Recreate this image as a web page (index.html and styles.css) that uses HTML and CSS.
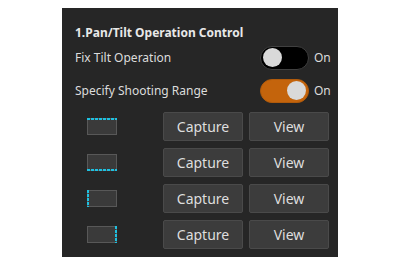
FILE: index.html
```html
<!DOCTYPE html>
<html lang="en">
<head>
  <meta charset="UTF-8">
  <title>Pan/Tilt Operation Control</title>
  <link rel="stylesheet" href="styles.css">
</head>
<body>

<div class="panel">
  <div class="title">1.Pan/Tilt Operation Control</div>

  <div class="switch-row">
    <span class="label">Fix Tilt Operation</span>
    <span class="switch-group">
      <span class="toggle off"><span class="knob"></span></span>
      <span class="state">On</span>
    </span>
  </div>

  <div class="switch-row">
    <span class="label">Specify Shooting Range</span>
    <span class="switch-group">
      <span class="toggle on"><span class="knob"></span></span>
      <span class="state">On</span>
    </span>
  </div>

  <!-- range edges: top / bottom / left / right -->
  <div class="range-grid">
    <div class="cell"><span class="thumb edge-top"></span></div>
    <button class="btn">Capture</button>
    <button class="btn">View</button>

    <div class="cell"><span class="thumb edge-bottom"></span></div>
    <button class="btn">Capture</button>
    <button class="btn">View</button>

    <div class="cell"><span class="thumb edge-left"></span></div>
    <button class="btn">Capture</button>
    <button class="btn">View</button>

    <div class="cell"><span class="thumb edge-right"></span></div>
    <button class="btn">Capture</button>
    <button class="btn">View</button>
  </div>
</div>

</body>
</html>
```

FILE: styles.css
```css
body {
  margin: 0;
  background-color: #ffffff;
  font-family: "Noto Sans", "Open Sans", sans-serif;
}

.panel {
  box-sizing: border-box;
  width: 276px;
  height: 249px;
  margin: 8px 0 0 62px;
  padding: 17px 8px 0 13px;
  background-color: #262626;
  color: #dcdcdc;
}

.title {
  font-size: 12px;
  font-weight: bold;
  line-height: 16px;
  color: #e8e8e8;
}

.switch-row {
  display: flex;
  align-items: center;
  justify-content: space-between;
  height: 33px;
  font-size: 12px;
}

.switch-group {
  display: flex;
  align-items: center;
  gap: 5px;
}

.toggle {
  box-sizing: border-box;
  position: relative;
  width: 49px;
  height: 24px;
  border-radius: 12px;
  display: flex;
  align-items: center;
  padding: 0 2px;
}

.toggle.off {
  background-color: #000000;
  border: 1px solid #404040;
}

.toggle.on {
  background-color: #c4640c;
  border: 1px solid #b05a0b;
  justify-content: flex-end;
}

.knob {
  width: 19px;
  height: 19px;
  border-radius: 50%;
  background-color: #d9d9d9;
}

.state {
  width: 16px;
  font-size: 12px;
}

.range-grid {
  display: grid;
  grid-template-columns: 82px 80px 80px;
  grid-auto-rows: 29px;
  column-gap: 6px;
  row-gap: 7px;
  margin-top: 5px;
}

.cell {
  display: flex;
  align-items: center;
}

.thumb {
  box-sizing: border-box;
  position: relative;
  width: 30px;
  height: 17px;
  margin-left: 12px;
  background-color: #3a3a3a;
  border: 1px solid #585858;
}

.thumb::after {
  content: "";
  position: absolute;
  background: repeating-linear-gradient(90deg, #1ec0e0 0 3px, transparent 3px 4px);
}

.edge-top::after,
.edge-bottom::after {
  left: -1px;
  right: -1px;
  height: 2px;
}

.edge-top::after { top: -1px; }
.edge-bottom::after { bottom: -1px; }

.edge-left::after,
.edge-right::after {
  top: -1px;
  bottom: -1px;
  width: 2px;
  background: repeating-linear-gradient(180deg, #1ec0e0 0 3px, transparent 3px 4px);
}

.edge-left::after { left: -1px; }
.edge-right::after { right: -1px; }

.btn {
  font-family: inherit;
  font-size: 14px;
  color: #dedede;
  background-color: #3c3c3c;
  border: 1px solid #4a4a4a;
  border-radius: 2px;
  padding: 0;
  cursor: pointer;
}

.btn:hover {
  background-color: #454545;
}
```
